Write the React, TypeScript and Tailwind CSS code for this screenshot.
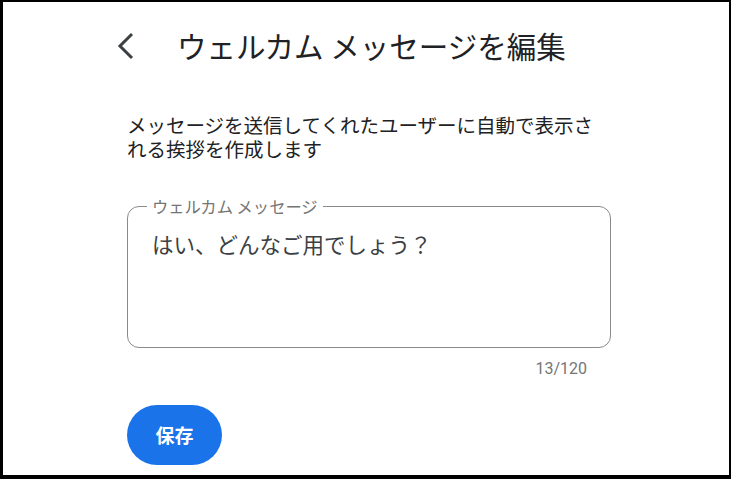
export default function App() {
  return (
    <div
      className="w-[731px] h-[479px] bg-white border-black border-t-2 border-l-[3px] border-r-2 border-b-[4px] overflow-hidden"
      style={{ fontFamily: '"Noto Sans CJK JP", "Noto Sans", sans-serif' }}
    >
      <div className="flex items-center h-[86px] pl-[112px] pt-[2px]">
        <svg width="24" height="30" viewBox="0 0 24 30" className="shrink-0">
          <path d="M17 3 L5 15 L17 27" fill="none" stroke="#3c4043" strokeWidth="3" />
        </svg>
        <h1 className="ml-[38px] text-[29.5px] leading-none text-[#202124] whitespace-nowrap">
          ウェルカム メッセージを編集
        </h1>
      </div>

      <div className="pl-[124px] w-[608px]">
        <p className="mt-[25px] text-[19.5px] leading-[24px] text-[#202124]">
          メッセージを送信してくれたユーザーに自動で表示される挨拶を作成します
        </p>

        <div className="relative mt-[45px] h-[142px] rounded-[12px] border-[1.5px] border-[#8a8a8a]">
          <span className="absolute -top-[12px] left-[19px] bg-white px-[5px] text-[16.3px] leading-[22px] text-[#757575]">
            ウェルカム メッセージ
          </span>
          <div className="pl-[24px] pt-[22px] text-[21.5px] leading-[30px] text-[#3c4043]">
            はい、どんなご用でしょう？
          </div>
        </div>

        <div
          className="flex justify-end pr-[24px] mt-[10px] text-[16px] leading-[22px] text-[#757575]"
          style={{ fontFamily: 'Roboto, "Noto Sans", sans-serif' }}
        >
          13/120
        </div>

        <button className="mt-[25px] w-[95px] h-[60px] rounded-full bg-[#1a73e8] text-white text-[19px] font-bold">
          保存
        </button>
      </div>
    </div>
  );
}
